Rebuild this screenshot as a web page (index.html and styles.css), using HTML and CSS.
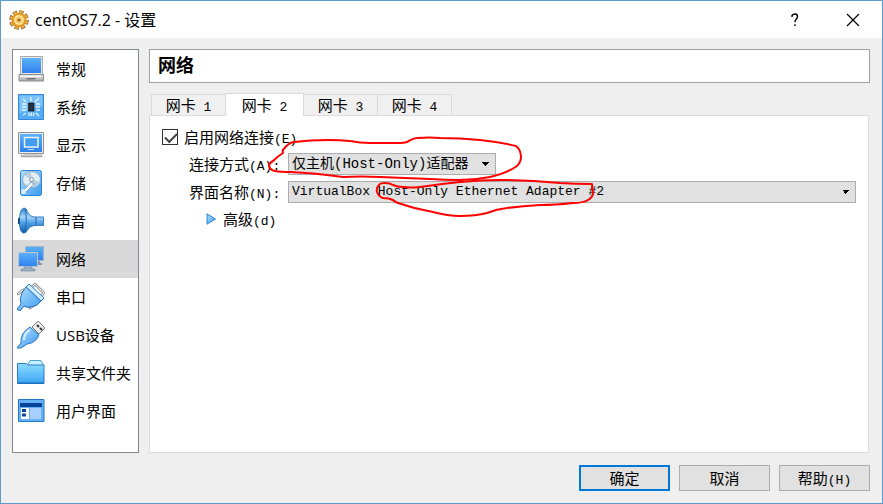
FILE: index.html
```html
<!DOCTYPE html>
<html lang="zh-CN">
<head>
<meta charset="utf-8">
<title>centOS7.2 - 设置</title>
<link rel="stylesheet" href="styles.css">
</head>
<body>
<svg class="defs" width="0" height="0" aria-hidden="true">
  <defs>
    <linearGradient id="blue" x1="0" y1="0" x2="0" y2="1"><stop offset="0" stop-color="#5cb2fb"/><stop offset="1" stop-color="#2f80ee"/></linearGradient>
    <linearGradient id="sky" x1="0" y1="0" x2="1" y2="1"><stop offset="0" stop-color="#b4e1ff"/><stop offset="1" stop-color="#3a98ee"/></linearGradient>
    <linearGradient id="folder" x1="0" y1="0" x2="0" y2="1"><stop offset="0" stop-color="#8ddcff"/><stop offset="1" stop-color="#3ba4f4"/></linearGradient>
    <linearGradient id="horn" x1="0" y1="0" x2="0" y2="1"><stop offset="0" stop-color="#2c7ccc"/><stop offset=".35" stop-color="#a5d6fb"/><stop offset=".6" stop-color="#4e9fe2"/><stop offset="1" stop-color="#1258a8"/></linearGradient>
    <linearGradient id="grey" x1="0" y1="0" x2="0" y2="1"><stop offset="0" stop-color="#eeeeee"/><stop offset="1" stop-color="#a5a5a5"/></linearGradient>
    <radialGradient id="gold"><stop offset="0" stop-color="#ffe9a0"/><stop offset=".6" stop-color="#f4b63c"/><stop offset="1" stop-color="#d98a1c"/></radialGradient>
  </defs>
</svg>
<div class="window">
  <header class="titlebar">
    <svg class="gear" viewBox="0 0 20 20" aria-hidden="true">
      <circle cx="10" cy="10" r="7.800" fill="none" stroke="#8a5a1c" stroke-width="4" stroke-dasharray="4.200 1.926"/>
      <circle cx="10" cy="10" r="7.800" fill="none" stroke="#eeb047" stroke-width="2.600" stroke-dasharray="3.200 2.926" stroke-dashoffset="-.5"/>
      <circle cx="10" cy="10" r="7.300" fill="url(#gold)"/>
      <circle cx="10" cy="10" r="4.200" fill="none" stroke="#fff0b0" stroke-width="1.200"/>
      <circle cx="10" cy="10" r="1.600" fill="#8d6425"/>
    </svg>
    <h1 class="title">centOS7.2 - 设置</h1>
    <button class="caption" type="button" aria-label="帮助"><svg viewBox="0 0 14 14"><path d="M4 4V2.500Q5 1 7 1Q9.500 1 9.500 3.500Q9.500 5 8 6.500Q7 7.500 7 9.200M7 11.300V13" fill="none" stroke="#000" stroke-width="1.400"/></svg></button>
    <button class="caption" type="button" aria-label="关闭"><svg viewBox="0 0 14 14"><path d="M1 1L13 13M13 1L1 13" fill="none" stroke="#000" stroke-width="1.200"/></svg></button>
  </header>
  <div class="body">
    <nav class="sidebar">
      <a class="item" href="#"><svg viewBox="0 0 28 28"><path d="M3.500 1.500H25.500V20H3.500Z" fill="#e8e8e8" stroke="#aaa"/><path d="M5 3H24V18H5Z" fill="url(#blue)"/><path d="M2 19.500H26.500V26H2Z" fill="url(#grey)" stroke="#8c8c8c"/><path d="M4 21.500H24.500" stroke="#fff"/><path d="M9 23H19L18 24.500H10Z" fill="#777"/></svg>常规</a>
      <a class="item" href="#"><svg viewBox="0 0 28 28"><path d="M1.500 1.500H26.500V26.500H1.500Z" fill="#55acf6" stroke="#3388dc"/><path d="M2.500 2.500H25.500V13L2.500 20Z" fill="#7cc3fc"/><path d="M11.500 10H17V18H11.500Z" fill="#26313e" stroke="#111" stroke-width=".7"/><path d="M14 4V8M6 6L9 9M22 5L18 9M5 11H9.500M5 14H9.500M5 17H9.500M19 11H23M19 14H23M19 17H23M6 22L9 20M12 19.500V23M14.300 19.500V23M16.600 19.500V23M19 20L22 23" stroke="#dff2ff" stroke-width="1.400"/></svg>系统</a>
      <a class="item" href="#"><svg viewBox="0 0 28 28"><path d="M1.500 1.500H26.500V22.500H1.500Z" fill="#eee" stroke="#929292"/><path d="M3 3H25V21H3Z" fill="url(#blue)"/><path d="M7.500 6.500H21V16H7.500Z" fill="#439bf2" stroke="#e9f6ff" stroke-width="1.500"/><path d="M11 18.500H17" stroke="#b9dcff"/><path d="M9 23H19V24H25V26H4V24H9Z" fill="url(#grey)" stroke="#999" stroke-width=".5"/></svg>显示</a>
      <a class="item" href="#"><svg viewBox="0 0 28 28"><rect x="3.500" y="1.500" width="21" height="25" rx="2" fill="url(#sky)" stroke="#2b82d6"/><ellipse cx="14.500" cy="10.500" rx="9" ry="8" fill="#e2eef5" stroke="#82acc9"/><path d="M14.500 10.500L7 6A9 8 0 0 1 14 2.700ZM14.500 10.500L23 13A9 8 0 0 1 17 18Z" fill="#b6cedd"/><circle cx="14.500" cy="10.500" r="2" fill="#fff" stroke="#7291a9"/><path d="M14 13L5 23L8 24L17 15Z" fill="#eef8ff" stroke="#5485ad" stroke-width=".7"/><circle cx="6.500" cy="22.500" r="2.500" fill="#dcefff"/></svg>存储</a>
      <a class="item" href="#"><svg viewBox="0 0 28 28"><path d="M2.500 11Q3 2 7 1Q9.500 1 10.500 5Q13 10 17 10H26.500V18.500H17Q13 19 10.500 23Q9 27 6 26Q3 25 2.500 17Z" fill="url(#horn)" stroke="#3b7fbe"/><path d="M8.500 2Q10.500 14 8 25M19 10V18" fill="none" stroke="#1b68b5"/><path d="M2 11V17" stroke="#14508f" stroke-width="2"/></svg>声音</a>
      <a class="item current" href="#" aria-current="page"><svg viewBox="0 0 28 28"><path d="M8.500 1.500H26.500V15.500H8.500Z" fill="url(#blue)" stroke="#a5b4c2"/><path d="M20 16H23V18H25V20H20Z" fill="#8398ab"/><path d="M1.500 7.500H20.500V21.500H1.500Z" fill="url(#blue)" stroke="#b9c5d0"/><path d="M7 22H15V24H18V26H4V24H7Z" fill="#9bb0c4" stroke="#73899f" stroke-width=".6"/></svg>网络</a>
      <a class="item" href="#"><svg viewBox="0 0 28 28"><path d="M15 4L18 1L27 10L24 13M1 11L6 7M13 25L17 22" fill="none" stroke="#777" stroke-width="2.600" stroke-linecap="round"/><path d="M15 4L18 1L27 10L24 13M1 11L6 7M13 25L17 22" fill="none" stroke="#eee" stroke-width="1.200" stroke-linecap="round"/><path d="M9 4L12 1L27 15L24 18Z" fill="#d2edff" stroke="#3182cb"/><path d="M9 4L24 18Q21 23 14 24Q9 25 7 23L3 28L0 26L4 21Q2 16 5 10Z" fill="url(#sky)" stroke="#2271bd"/></svg>串口</a>
      <a class="item" href="#"><svg viewBox="0 0 28 28"><path d="M15 6L21 0L28 7L22 13Z" fill="#eee" stroke="#777"/><path d="M20 4L22 6M23 7L25 9" stroke="#333" stroke-width="2"/><path d="M13 6L22 14Q19 22 10 23L4 27L0 27Q1 25 4 22Q3 12 13 6Z" fill="url(#sky)" stroke="#2b79bd"/><path d="M13 9Q7 12 7 19" fill="none" stroke="#d8f1ff" stroke-width="2"/></svg>USB设备</a>
      <a class="item" href="#"><svg viewBox="0 0 28 28"><path d="M10.500 6L13 1.500H24L26.500 6V10H10.500Z" fill="#c5eeff" stroke="#50a5d5"/><path d="M.5 4.500H9L11 6H27V24.500H.5Z" fill="url(#folder)" stroke="#2a7fc4"/><path d="M1 24H27" stroke="#1764b4"/></svg>共享文件夹</a>
      <a class="item" href="#"><svg viewBox="0 0 28 28"><path d="M1.500 2.500H27V24.500H1.500Z" fill="#62b2f4" stroke="#2577c7"/><path d="M3 6H25V10H3Z" fill="#0a429b"/><path d="M4 11H12V22H4Z" fill="#fff"/><path d="M13 11H24V22H13Z" fill="#a9cfff"/><path d="M5 12H9V15H5ZM5 16.500H9V19.500H5Z" fill="#0d48a0"/></svg>用户界面</a>
    </nav>
    <main class="content">
      <h2 class="heading">网络</h2>
      <div class="tabs" role="tablist">
        <button class="tab" type="button" role="tab">网卡<span class="latin"> 1</span></button>
        <button class="tab active" type="button" role="tab" aria-selected="true">网卡<span class="latin"> 2</span></button>
        <button class="tab" type="button" role="tab">网卡<span class="latin"> 3</span></button>
        <button class="tab" type="button" role="tab">网卡<span class="latin"> 4</span></button>
      </div>
      <form class="panel" id="settings">
        <label class="enable"><input class="check" type="checkbox" checked><span>启用网络连接<span class="latin">(E)</span></span></label>
        <div class="row">
          <label class="name" for="attach">连接方式<span class="latin">(A):</span></label>
          <select class="combo short" id="attach"><option>仅主机(Host-Only)适配器</option></select>
        </div>
        <div class="row">
          <label class="name" for="adapter">界面名称<span class="latin">(N):</span></label>
          <select class="combo long" id="adapter"><option>VirtualBox Host-Only Ethernet Adapter #2</option></select>
        </div>
        <button class="advanced" type="button"><svg viewBox="0 0 10 12" aria-hidden="true"><path d="M1 .8L9.500 6L1 11.200Z" fill="url(#sky)" stroke="#2f80cc"/></svg><span>高级<span class="latin">(d)</span></span></button>
        <svg class="ink" viewBox="260 125 350 95" aria-hidden="true">
          <path d="M294 142Q310 140 328 140Q340 140 350 141Q360 143 370 143H400Q404 143 407 142C411 140 413 138 417 138Q430 137 440 138Q460 138 480 140Q500 142 516 146Q521 150 521 157Q521 162 517 166Q507 173 490 177Q475 180 460 180Q445 180 430 179L380 177Q360 176 343 177Q315 173 290 172Q280 172 275 171Q270 170 269 166Q269 163 273 161Q278 156 283 153Q282 150 284 149Q288 143 294 142Z"/>
          <path d="M393 185Q390 183 385 183Q380 183 379 185Q376 188 377 192Q379 197 383 198Q389 198 393 200Q395 202 398 203Q415 209 433 212Q448 216 460 216Q476 216 487 213Q497 209 507 208Q522 206 540 205Q555 205 573 203Q583 203 588 200Q593 197 593 193L592 184Q575 184 560 183Q530 180 500 180Q480 180 460 182Q440 184 420 187Q408 188 403 187Q397 187 393 185Z"/>
        </svg>
      </form>
    </main>
  </div>
  <footer class="actions">
    <button class="button primary" type="submit" form="settings">确定</button>
    <button class="button" type="button">取消</button>
    <button class="button" type="button">帮助<span class="latin">(H)</span></button>
  </footer>
</div>
</body>
</html>
```
FILE: styles.css
```css
* {
  box-sizing: border-box;
}

body {
  margin: 0;
  color: #000;
  font: 15px/20px "Open Sans", "Noto Sans CJK SC", sans-serif;
}

button,
select {
  margin: 0;
  color: inherit;
  font: inherit;
}

.defs {
  position: absolute;
}

.window {
  display: flex;
  flex-direction: column;
  min-height: 100vh;
  border: 1px solid #5b9dcd;
  background: #efefef;
}

.titlebar {
  display: flex;
  align-items: center;
  height: 37px;
  padding-left: 8px;
  background: #fff;
}

.gear {
  width: 20px;
  height: 20px;
  margin-right: 6px;
}

.title {
  flex: 1;
  margin: 0;
  font-size: 16px;
  font-weight: 400;
}

.caption {
  display: grid;
  place-items: center;
  width: 58px;
  height: 100%;
  padding: 0;
  border: 0;
  background: none;
}

.caption svg {
  width: 14px;
  height: 14px;
}

.body {
  display: flex;
  flex: 1;
  gap: 10px;
  padding: 11px 12px 0 11px;
}

.sidebar {
  width: 127px;
  flex: none;
  border: 1px solid #828790;
  background: #fff;
}

.item {
  display: flex;
  align-items: center;
  gap: 11px;
  height: 38px;
  padding-left: 4px;
  color: inherit;
  text-decoration: none;
  white-space: nowrap;
}

.item svg {
  flex: none;
  width: 28px;
  height: 28px;
}

.item.current {
  background: #d9d9d9;
}

.content {
  display: flex;
  flex: 1;
  flex-direction: column;
  min-width: 0;
}

.heading {
  margin: 0 0 10px;
  padding: 5px 8px 6px;
  border: 1px solid #a0a0a0;
  background: #fff;
  font-size: 18px;
  font-weight: 700;
  line-height: 21px;
}

.tabs {
  display: flex;
  align-items: flex-end;
  padding-left: 2px;
}

.tab {
  width: 75px;
  height: 21px;
  margin-right: -1px;
  padding: 0;
  border: 1px solid #d9d9d9;
  border-bottom: 0;
  background: #f0f0f0;
  line-height: 18px;
  white-space: pre;
}

.tab.active {
  z-index: 1;
  width: 79px;
  height: 23px;
  margin-bottom: -1px;
  background: #fff;
}

.latin {
  font-family: "Liberation Mono", monospace;
  font-size: 13px;
  line-height: 1;
}

.panel {
  position: relative;
  flex: 1;
  margin-right: 1px;
  padding: 11px 12px;
  border: 1px solid #dcdcdc;
  background: #fff;
}

.enable {
  display: flex;
  align-items: center;
  gap: 6px;
  width: max-content;
  margin-bottom: 6px;
}

.check {
  appearance: none;
  width: 16px;
  height: 16px;
  margin: 0;
  border: 1px solid #333;
  background: #fff;
}

.check:checked::before {
  content: "";
  display: block;
  width: 10px;
  height: 5px;
  margin: 3px 2px;
  border: solid #444;
  border-width: 0 0 2px 2px;
  transform: rotate(-45deg);
}

.row {
  display: flex;
  align-items: center;
  margin-bottom: 6px;
  padding-left: 27px;
}

.name {
  width: 99px;
  flex: none;
}

.combo {
  appearance: none;
  height: 22px;
  padding: 0 24px 0 3px;
  border: 1px solid #adadad;
  border-radius: 0;
  background-color: #e1e1e1;
  background-image: linear-gradient(to bottom left, #000 50%, transparent 50%), linear-gradient(to bottom right, #000 50%, transparent 50%);
  background-position: right 9px center, right 5px center;
  background-size: 4px 4px;
  background-repeat: no-repeat;
  font: 13px/20px "Liberation Mono", "Noto Sans CJK SC", monospace;
}

.short {
  width: 208px;
  font-size: 14px;
}

.long {
  flex: 1;
  min-width: 0;
}

.advanced {
  display: flex;
  align-items: center;
  gap: 7px;
  margin-left: 44px;
  padding: 0;
  border: 0;
  background: none;
}

.advanced svg {
  width: 10px;
  height: 12px;
}

.ink {
  position: absolute;
  top: 9px;
  left: 110px;
  width: 350px;
  height: 95px;
  fill: none;
  stroke: #f00;
  stroke-width: 2;
  stroke-linecap: round;
  stroke-linejoin: round;
  pointer-events: none;
}

.actions {
  display: flex;
  justify-content: flex-end;
  gap: 9px;
  padding: 12px;
}

.button {
  width: 91px;
  height: 26px;
  padding: 0;
  border: 1px solid #adadad;
  background: #e1e1e1;
}

.primary {
  border: 2px solid #0078d7;
}
```
